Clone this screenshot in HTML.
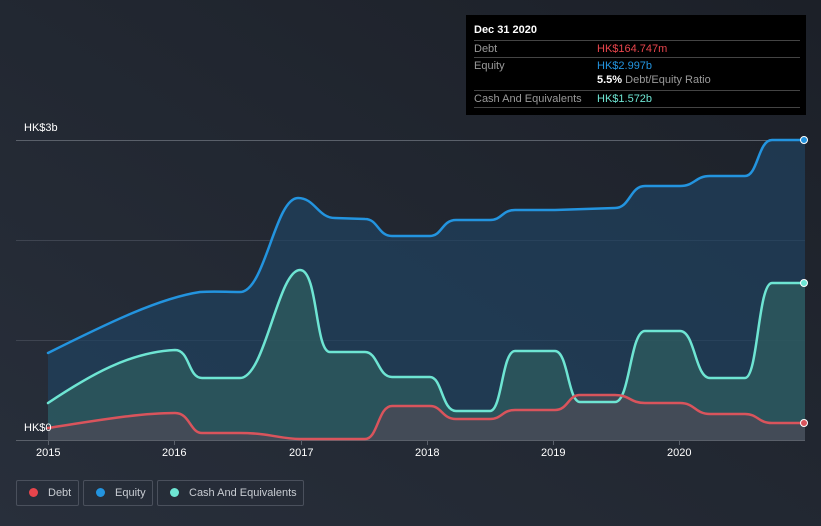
<!DOCTYPE html>
<html><head><meta charset="utf-8"><style>
html,body{margin:0;width:821px;height:526px;overflow:hidden;}
body{background:#252b36;font-family:"Liberation Sans",sans-serif;position:relative}
.tt{position:absolute;left:466px;top:15px;width:340px;height:100px;background:#000;color:#fff;font-size:11px;}
.tt .r{position:absolute;left:8px;width:326px;border-top:1px solid #444;height:16px;line-height:16px;color:#9a9a9a}
.lg{position:absolute;top:480px;height:26px;border:1px solid #4a505c;border-radius:2px;color:#c8ccd2;font-size:11px;line-height:24px;box-sizing:border-box;white-space:nowrap}
.lg i{display:inline-block;width:9px;height:9px;border-radius:50%;margin:0 10px 0 12px;vertical-align:-1px}
.ax{position:absolute;color:#fff;font-size:11px}
</style></head><body>
<svg width="821" height="526" style="position:absolute;left:0;top:0">
<defs>
<linearGradient id="bg" x1="0" y1="1" x2="1" y2="0"><stop offset="0" stop-color="#282f3b"/><stop offset="1" stop-color="#1c2028"/></linearGradient>
</defs>
<rect x="0" y="0" width="821" height="526" fill="url(#bg)"/>
<g stroke="#3e4450" stroke-width="1"><line x1="16" y1="140.5" x2="805" y2="140.5" stroke="#5a606a"/><line x1="16" y1="240.5" x2="805" y2="240.5"/><line x1="16" y1="340.5" x2="805" y2="340.5"/><line x1="16" y1="440.5" x2="805" y2="440.5" stroke="#5a606a"/></g>
<g stroke-linejoin="round" stroke-linecap="round">
<path d="M48,353 C110,322 160,298 200,292 C215,291 225,292 240,292 C265,292 275,198 298,198 C315,198 318,218 335,218 L365,219 C378,219 378,236 392,236 L430,236 C442,236 442,220 456,220 L490,220 C502,220 502,210 515,210 L555,210 L615,208 C630,208 630,186 645,186 L680,186 C695,186 695,176 710,176 L745,176 C758,176 758,140 772,140 L805,140 L805,440 L48,440Z" fill="#1f4260" fill-opacity="0.7"/>
<path d="M48,403 C90,375 130,352 175,350 C190,350 188,378 202,378 L240,378 C265,378 278,270 300,270 C318,270 315,352 330,352 L365,352 C378,352 378,377 392,377 L430,377 C442,377 442,411 456,411 L490,411 C502,411 502,351 515,351 L555,351 C568,351 568,402 580,402 L615,402 C630,402 630,331 645,331 L680,331 C695,331 695,378 710,378 L745,378 C758,378 758,283 772,283 L805,283 L805,440 L48,440Z" fill="#2d5a5e" fill-opacity="0.8"/>
<path d="M48,428 C100,420 140,413 175,413 C190,413 190,433 202,433 L240,433 C270,433 280,439 300,439 L365,439 C378,439 378,406 392,406 L430,406 C442,406 442,419 456,419 L490,419 C502,419 502,410 515,410 L555,410 C568,410 568,395 580,395 L615,395 C630,395 630,403 645,403 L680,403 C695,403 695,414 710,414 L745,414 C758,414 758,423 772,423 L805,423 L805,440 L48,440Z" fill="#4a4a56" fill-opacity="0.8"/>
<path d="M48,353 C110,322 160,298 200,292 C215,291 225,292 240,292 C265,292 275,198 298,198 C315,198 318,218 335,218 L365,219 C378,219 378,236 392,236 L430,236 C442,236 442,220 456,220 L490,220 C502,220 502,210 515,210 L555,210 L615,208 C630,208 630,186 645,186 L680,186 C695,186 695,176 710,176 L745,176 C758,176 758,140 772,140 L805,140" fill="none" stroke="#2394df" stroke-width="2.5"/>
<path d="M48,403 C90,375 130,352 175,350 C190,350 188,378 202,378 L240,378 C265,378 278,270 300,270 C318,270 315,352 330,352 L365,352 C378,352 378,377 392,377 L430,377 C442,377 442,411 456,411 L490,411 C502,411 502,351 515,351 L555,351 C568,351 568,402 580,402 L615,402 C630,402 630,331 645,331 L680,331 C695,331 695,378 710,378 L745,378 C758,378 758,283 772,283 L805,283" fill="none" stroke="#6ee5d3" stroke-width="2.5"/>
<path d="M48,428 C100,420 140,413 175,413 C190,413 190,433 202,433 L240,433 C270,433 280,439 300,439 L365,439 C378,439 378,406 392,406 L430,406 C442,406 442,419 456,419 L490,419 C502,419 502,410 515,410 L555,410 C568,410 568,395 580,395 L615,395 C630,395 630,403 645,403 L680,403 C695,403 695,414 710,414 L745,414 C758,414 758,423 772,423 L805,423" fill="none" stroke="#d9545c" stroke-width="2.5"/>
</g>
<circle cx="804" cy="140" r="3.5" fill="#2394df" stroke="#fff" stroke-width="1"/>
<circle cx="804" cy="283" r="3.5" fill="#6ee5d3" stroke="#fff" stroke-width="1"/>
<circle cx="804" cy="423" r="3.5" fill="#d9545c" stroke="#fff" stroke-width="1"/>
<g stroke="#5a606a"><line x1="48.5" y1="440" x2="48.5" y2="445"/><line x1="174.5" y1="440" x2="174.5" y2="445"/><line x1="301.5" y1="440" x2="301.5" y2="445"/><line x1="427.5" y1="440" x2="427.5" y2="445"/><line x1="553.5" y1="440" x2="553.5" y2="445"/><line x1="679.5" y1="440" x2="679.5" y2="445"/></g>
</svg>
<div class="ax" style="left:24px;top:122px">HK$3b</div>
<div class="ax" style="left:24px;top:422px">HK$0</div>
<div class="ax" style="left:36px;top:447px">2015</div>
<div class="ax" style="left:162px;top:447px">2016</div>
<div class="ax" style="left:289px;top:447px">2017</div>
<div class="ax" style="left:415px;top:447px">2018</div>
<div class="ax" style="left:541px;top:447px">2019</div>
<div class="ax" style="left:667px;top:447px">2020</div>
<div class="tt">
<div style="position:absolute;left:8px;top:9px;font-weight:bold">Dec 31 2020</div>
<div class="r" style="top:25px">Debt<span style="position:absolute;left:123px;color:#e8454c">HK$164.747m</span></div>
<div class="r" style="top:42px">Equity<span style="position:absolute;left:123px;color:#2394df">HK$2.997b</span></div>
<div style="position:absolute;left:131px;top:59px;color:#9a9a9a"><b style="color:#fff">5.5%</b> Debt/Equity Ratio</div>
<div class="r" style="top:75px">Cash And Equivalents<span style="position:absolute;left:123px;color:#6ee5d3">HK$1.572b</span></div>
<div style="position:absolute;left:8px;top:92px;width:326px;border-top:1px solid #444"></div>
</div>
<div class="lg" style="left:16px;width:63px"><i style="background:#e8454c"></i>Debt</div>
<div class="lg" style="left:83px;width:70px"><i style="background:#2394df"></i>Equity</div>
<div class="lg" style="left:157px;width:147px"><i style="background:#6ee5d3"></i>Cash And Equivalents</div>
</body></html>
